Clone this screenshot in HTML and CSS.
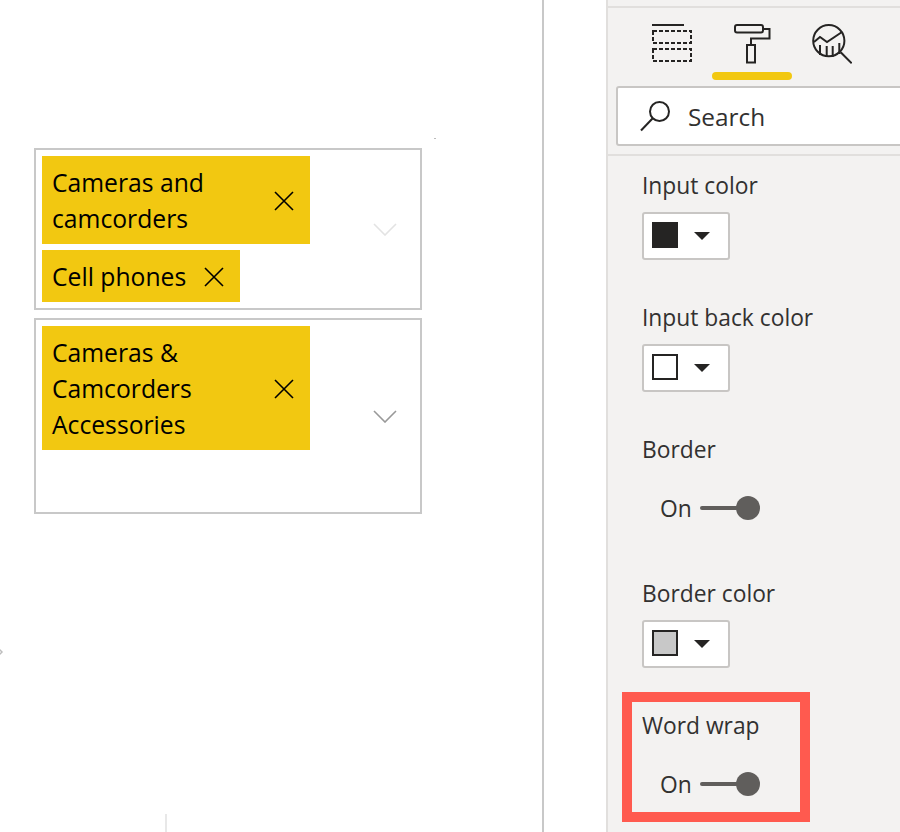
FILE: index.html
```html
<!DOCTYPE html>
<html lang="en">
  <head>
    <meta charset="UTF-8" />
    <title>Slicer format pane</title>
    <link rel="stylesheet" href="styles.css">
  </head>
  <body>
    <div class="canvas">
      <span class="speck"></span>
      <svg class="edge-mark" width="4" height="14" viewBox="0 0 4 14"><path d="M-4 1l6 6-6 6" fill="none" stroke="#bdbdbd" stroke-width="1.5"/></svg>
      <span class="tick"></span>

      <div class="slicer">
        <div class="chips">
          <div class="chip chip-wide">
            <span class="chip-text">Cameras and camcorders</span>
            <svg class="chip-x" viewBox="0 0 20 20"><path d="M1 1l18 18M19 1L1 19"/></svg>
          </div>
          <div class="chip">
            <span class="chip-text">Cell phones</span>
            <svg class="chip-x" viewBox="0 0 20 20"><path d="M1 1l18 18M19 1L1 19"/></svg>
          </div>
        </div>
        <svg class="chevron chevron-faint" viewBox="0 0 24 13"><path d="M1 1l11 11L23 1"/></svg>
      </div>

      <div class="slicer slicer-tall">
        <div class="chips">
          <div class="chip chip-wide">
            <span class="chip-text">Cameras &amp; Camcorders Accessories</span>
            <svg class="chip-x" viewBox="0 0 20 20"><path d="M1 1l18 18M19 1L1 19"/></svg>
          </div>
        </div>
        <svg class="chevron" viewBox="0 0 24 13"><path d="M1 1l11 11L23 1"/></svg>
      </div>
    </div>

    <div class="gutter"></div>

    <div class="panel">
      <div class="tabs">
        <div class="tab">
          <svg class="tab-icon" viewBox="0 0 40 44">
            <path d="M0 3h32"/>
            <rect x="1" y="9" width="38" height="12" stroke-dasharray="4 2"/>
            <rect x="1" y="27" width="38" height="12" stroke-dasharray="4 2"/>
          </svg>
        </div>
        <div class="tab tab-active">
          <svg class="tab-icon" viewBox="0 0 80 44">
            <rect x="23" y="3" width="28" height="7.500" rx="2"/>
            <path d="M51 7h6.500v9.500H39V23"/>
            <rect x="35" y="23" width="8" height="17.500"/>
          </svg>
        </div>
        <div class="tab">
          <svg class="tab-icon" viewBox="0 0 40 44">
            <circle cx="16.800" cy="18.700" r="15.600"/>
            <path d="M28.700 30.300l11 11M2 20l6-5 7 5 15-10M8 23v10M14.700 24v11M20.700 24v11M27.300 21v11"/>
          </svg>
        </div>
      </div>

      <div class="search-row">
        <div class="search">
          <svg class="search-icon" viewBox="0 0 30 31">
            <circle cx="19.500" cy="10.500" r="9.500"/>
            <path d="M12.500 17.500L1 29.500"/>
          </svg>
          <span>Search</span>
        </div>
      </div>

      <div class="fields">
        <div class="field">
          <div class="field-label">Input color</div>
          <div class="color-btn">
            <span class="swatch swatch-dark"></span>
            <span class="caret"></span>
          </div>
        </div>

        <div class="field">
          <div class="field-label">Input back color</div>
          <div class="color-btn">
            <span class="swatch"></span>
            <span class="caret"></span>
          </div>
        </div>

        <div class="field field-toggle">
          <div class="field-label">Border</div>
          <div class="toggle">
            <span class="toggle-text">On</span>
            <span class="toggle-track"></span>
            <span class="toggle-knob"></span>
          </div>
        </div>

        <div class="field field-last">
          <div class="field-label">Border color</div>
          <div class="color-btn">
            <span class="swatch swatch-gray"></span>
            <span class="caret"></span>
          </div>
        </div>

        <div class="highlight">
          <div class="field-label">Word wrap</div>
          <div class="toggle">
            <span class="toggle-text">On</span>
            <span class="toggle-track"></span>
            <span class="toggle-knob"></span>
          </div>
        </div>
      </div>
    </div>
  </body>
</html>
```

FILE: styles.css
```css
html,
body {
  margin: 0;
  height: 832px;
  overflow: hidden;
}
body {
  display: flex;
  background: white;
  font-family: "Open Sans", "Noto Sans", sans-serif;
}

/* report canvas */
.canvas {
  position: relative;
  box-sizing: border-box;
  width: 544px;
  height: 832px;
  padding: 148px 0 0 34px;
  border-right: 2px solid #c8c8c8;
}
.speck {
  position: absolute;
  left: 434px;
  top: 138px;
  width: 2px;
  height: 1px;
  background: #bbb;
}
.edge-mark {
  position: absolute;
  left: 0;
  top: 645px;
}
.tick {
  position: absolute;
  left: 165px;
  top: 814px;
  width: 2px;
  height: 18px;
  background: #e8e8e8;
}
.slicer {
  box-sizing: border-box;
  display: flex;
  align-items: center;
  width: 388px;
  padding: 6px 23px 6px 6px;
  border: 2px solid #c8c8c8;
  margin-bottom: 8px;
}
.slicer-tall {
  height: 196px;
}
.chips {
  display: flex;
  flex-direction: column;
  align-items: flex-start;
  align-self: flex-start;
  gap: 6px;
}
.chip {
  display: flex;
  align-items: center;
  box-sizing: border-box;
  padding: 9px 16px 7px 10px;
  background: #f2c811;
  color: #000;
  font-size: 24.7px;
  line-height: 36px;
}
.chip-wide {
  width: 268px;
}
.chip-text {
  flex: 1;
  margin-right: 18px;
}
.chip-x {
  flex: none;
  width: 20px;
  height: 20px;
  fill: none;
  stroke: #000;
  stroke-width: 1.6;
}
.chevron {
  flex: none;
  width: 24px;
  height: 13px;
  margin-left: auto;
  fill: none;
  stroke: #999;
  stroke-width: 1.6;
}
.chevron-faint {
  stroke: #e3e3e3;
}

.gutter {
  width: 62px;
  background: white;
}

/* format pane */
.panel {
  box-sizing: border-box;
  width: 294px;
  height: 832px;
  padding-top: 6px;
  border-left: 2px solid #e1dfdd;
  background: #f3f2f1;
  color: #323130;
  overflow: hidden;
  font-size: 22.8px;
}
.tabs {
  display: flex;
  gap: 20px;
  height: 72px;
  padding-left: 44px;
  border-top: 2px solid #e1dfdd;
}
.tab {
  position: relative;
  width: 40px;
  padding-top: 14px;
}
.tab-active {
  width: 80px;
}
.tab-active::after {
  content: "";
  position: absolute;
  left: 0;
  top: 64px;
  width: 80px;
  height: 8px;
  border-radius: 4px;
  background: #f2c811;
}
.tab-icon {
  display: block;
  width: 100%;
  height: 44px;
  fill: none;
  stroke: #252423;
  stroke-width: 2;
}
.search-row {
  padding: 6px 0 8px 8px;
  border-bottom: 2px solid #e1dfdd;
}
.search {
  box-sizing: border-box;
  display: flex;
  align-items: center;
  gap: 18px;
  width: 320px;
  height: 60px;
  padding-left: 22px;
  border: 2px solid #c8c6c4;
  border-radius: 3px;
  background: white;
  font-size: 24.4px;
}
.search-icon {
  width: 30px;
  height: 31px;
  fill: none;
  stroke: #252423;
  stroke-width: 2;
}
.fields {
  padding: 12px 0 0 34px;
}
.field {
  margin-bottom: 40px;
}
.field-toggle {
  margin-bottom: 44px;
}
.field-last {
  margin-bottom: 24px;
}
.field-label {
  line-height: 36px;
}
.color-btn {
  box-sizing: border-box;
  display: flex;
  align-items: center;
  width: 88px;
  height: 48px;
  margin-top: 8px;
  padding-left: 8px;
  border: 2px solid #c8c6c4;
  border-radius: 3px;
  background: white;
}
.swatch {
  box-sizing: border-box;
  width: 26px;
  height: 26px;
  margin-bottom: 2px;
  border: 2px solid #252423;
  background: white;
}
.swatch-dark {
  background: #252423;
}
.swatch-gray {
  background: #c8c8c8;
}
.caret {
  width: 0;
  height: 0;
  margin-left: 16px;
  border-style: solid;
  border-width: 8px 8px 0;
  border-color: #252423 transparent transparent;
}
.toggle {
  display: flex;
  align-items: center;
  height: 48px;
  margin-top: 16px;
  padding-left: 18px;
}
.toggle-text {
  width: 40px;
}
.toggle-track {
  width: 38px;
  height: 4px;
  border-radius: 2px;
  background: #605e5c;
}
.toggle-knob {
  width: 24px;
  height: 24px;
  margin-left: -2px;
  border-radius: 50%;
  background: #605e5c;
}
.highlight {
  box-sizing: border-box;
  width: 188px;
  margin-left: -20px;
  padding: 6px 0 4px 10px;
  border: 10px solid #ff5a4f;
}
```
